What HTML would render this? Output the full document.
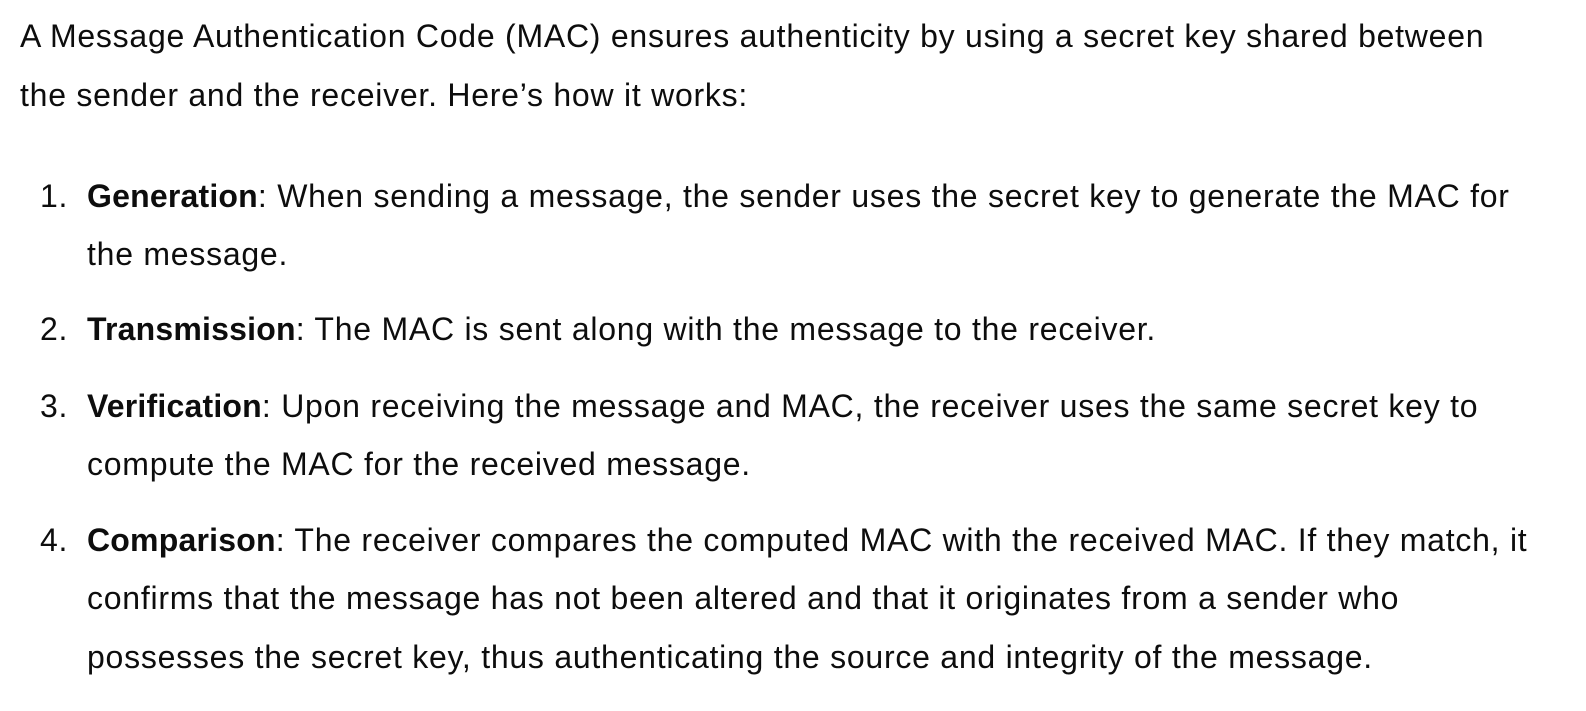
<!DOCTYPE html>
<html><head><meta charset="utf-8"><style>
html,body{margin:0;padding:0;background:#fff;width:1586px;height:711px;overflow:hidden}
.l{position:absolute;white-space:nowrap;font-family:"Liberation Sans",sans-serif;font-size:32px;line-height:58px;color:#0d0d0d;letter-spacing:0.75px}
b{font-weight:bold;letter-spacing:0.2px}
</style></head><body>
<div class="l" style="left:20px;top:7px">A Message Authentication Code (MAC) ensures authenticity by using a secret key shared between</div>
<div class="l" style="left:20px;top:66px">the sender and the receiver. Here’s how it works:</div>
<div class="l" style="left:40px;top:167px">1.</div>
<div class="l" style="left:87px;top:167px"><b>Generation</b>: When sending a message, the sender uses the secret key to generate the MAC for</div>
<div class="l" style="left:87px;top:225px">the message.</div>
<div class="l" style="left:40px;top:300px">2.</div>
<div class="l" style="left:87px;top:300px"><b>Transmission</b>: The MAC is sent along with the message to the receiver.</div>
<div class="l" style="left:40px;top:377px">3.</div>
<div class="l" style="left:87px;top:377px"><b>Verification</b>: Upon receiving the message and MAC, the receiver uses the same secret key to</div>
<div class="l" style="left:87px;top:435px">compute the MAC for the received message.</div>
<div class="l" style="left:40px;top:511px">4.</div>
<div class="l" style="left:87px;top:511px"><b>Comparison</b>: The receiver compares the computed MAC with the received MAC. If they match, it</div>
<div class="l" style="left:87px;top:569px">confirms that the message has not been altered and that it originates from a sender who</div>
<div class="l" style="left:87px;top:628px">possesses the secret key, thus authenticating the source and integrity of the message.</div>
</body></html>
